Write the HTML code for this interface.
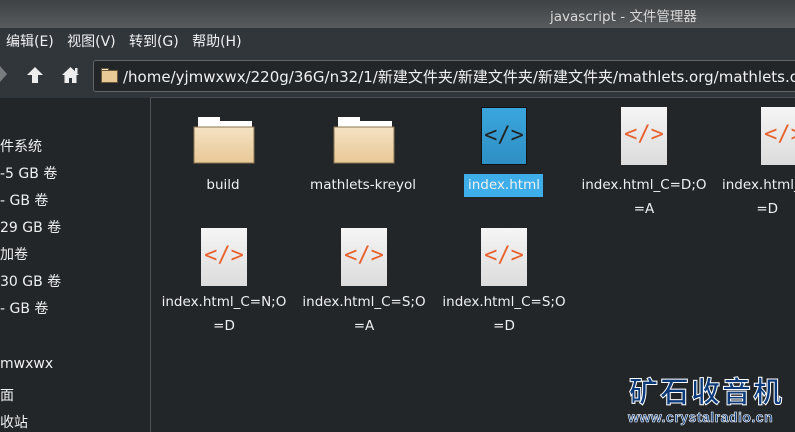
<!DOCTYPE html>
<html><head><meta charset="utf-8"><style>
*{margin:0;padding:0;box-sizing:border-box}
html,body{width:795px;height:432px;overflow:hidden}
body{background:#232629;font-family:"DejaVu Sans","Noto Sans CJK SC",sans-serif;color:#eff0f1;position:relative;font-size:14px}
#w{position:absolute;left:0;top:0;width:795px;height:432px;overflow:hidden}
.a{position:absolute;white-space:nowrap}
.title{left:0;top:0;width:795px;height:28px;background:linear-gradient(#3f4245,#585b5e)}
.menu{left:0;top:28px;width:795px;height:24px;background:#31363b}
.tool{left:0;top:52px;width:795px;height:46px;background:#31363b}
.addr{left:93px;top:60px;width:702px;height:32px;border:1px solid #616569;border-right:none;border-radius:3px 0 0 3px;background:#232629;overflow:hidden}
.pane{left:150px;top:97px;width:645px;height:335px;border-left:1px solid #4d5155;border-top:1px solid #4d5155}
.lbl{font-size:13.5px;text-align:center;width:140px;line-height:24px;color:#eff0f1}
.doc{width:46px;height:58px;background:linear-gradient(#f5f5f5,#dcdcdc);color:#e8612c;font:22px "DejaVu Sans Mono",monospace;text-align:center;line-height:56px}
.side{font-size:14px;left:0}
</style></head><body><div id="w">
<div class="a title"></div>
<div class="a" style="left:550px;top:5px;font-size:13.5px;color:#d8d8d8">javascript - 文件管理器</div>
<div class="a menu"></div>
<div class="a" style="left:6px;top:31px;font-size:14px">编辑(E)&nbsp;&nbsp;&nbsp;视图(V)&nbsp;&nbsp;&nbsp;转到(G)&nbsp;&nbsp;&nbsp;帮助(H)</div>
<div class="a tool"></div>
<svg class="a" style="left:0;top:66px" width="10" height="16"><path d="M0 0L7 8L0 16Z" fill="#7a7d80"/></svg>
<svg class="a" style="left:26px;top:66px" width="18" height="18"><path d="M9 1L1 9H6V17H12V9H17Z" fill="#eee"/></svg>
<svg class="a" style="left:61px;top:66px" width="19" height="18"><path d="M9.5 1L1 9H3.5V17H8V12H11V17H15.5V9H18Z" fill="#eee"/><rect x="14" y="2" width="2.5" height="5" fill="#eee"/></svg>
<div class="a addr"></div>
<svg class="a" style="left:101px;top:68px" width="17" height="15"><rect x="0.5" y="0.5" width="7" height="3" fill="#f4e6c8" stroke="#6b5a3a"/><rect x="0.5" y="2.5" width="16" height="12" fill="#e9c996" stroke="#6b5a3a"/></svg>
<div class="a" style="left:123px;top:66px;font-size:15px;width:672px;overflow:hidden">/home/yjmwxwx/220g/36G/n32/1/新建文件夹/新建文件夹/新建文件夹/mathlets.org/mathlets.org/ja</div>
<div class="a pane"></div>
<div class="a side" style="top:136px">件系统</div>
<div class="a side" style="top:163px">-5 GB 卷</div>
<div class="a side" style="top:190px">- GB 卷</div>
<div class="a side" style="top:217px">29 GB 卷</div>
<div class="a side" style="top:244px">加卷</div>
<div class="a side" style="top:271px">30 GB 卷</div>
<div class="a side" style="top:298px">- GB 卷</div>
<div class="a side" style="top:356px">mwxwx</div>
<div class="a side" style="top:385px">面</div>
<div class="a side" style="top:412px">收站</div>
<svg class="a" style="left:193px;top:115px" width="63" height="52"><defs><linearGradient id="g" x1="0" y1="0" x2="0" y2="1"><stop offset="0" stop-color="#f4e2c4"/><stop offset="1" stop-color="#e8c896"/></linearGradient></defs><rect x="5" y="2" width="22" height="8" fill="#fff"/><rect x="5" y="6" width="54" height="10" fill="#fff"/><path d="M1 12H61V48H1Z" fill="url(#g)" stroke="#8a7550"/></svg>
<svg class="a" style="left:333px;top:115px" width="63" height="52"><rect x="5" y="2" width="22" height="8" fill="#fff"/><rect x="5" y="6" width="54" height="10" fill="#fff"/><path d="M1 12H61V48H1Z" fill="url(#g)" stroke="#8a7550"/></svg>
<div class="a lbl" style="left:153px;top:173px">build</div>
<div class="a lbl" style="left:293px;top:173px">mathlets-kreyol</div>
<div class="a doc" style="left:481px;top:107px;background:linear-gradient(#3aa6dd,#2e8fc4);color:#222;border:1px solid #111">&lt;/&gt;</div>
<div class="a" style="left:464px;top:174px;width:79px;height:23px;background:#3daee9"></div>
<div class="a lbl" style="left:434px;top:173px">index.html</div>
<div class="a doc" style="left:621px;top:107px">&lt;/&gt;</div>
<div class="a lbl" style="left:574px;top:173px">index.html_C=D;O<br>=A</div>
<div class="a doc" style="left:761px;top:107px">&lt;/&gt;</div>
<div class="a lbl" style="left:714px;top:173px;width:81px;overflow:hidden;text-align:left;padding-left:8px">index.html_C=N;O<br>&nbsp;&nbsp;&nbsp;&nbsp;&nbsp;&nbsp;&nbsp;&nbsp;=D</div>
<div class="a doc" style="left:201px;top:228px">&lt;/&gt;</div>
<div class="a lbl" style="left:154px;top:290px">index.html_C=N;O<br>=D</div>
<div class="a doc" style="left:341px;top:228px">&lt;/&gt;</div>
<div class="a lbl" style="left:294px;top:290px">index.html_C=S;O<br>=A</div>
<div class="a doc" style="left:481px;top:228px">&lt;/&gt;</div>
<div class="a lbl" style="left:434px;top:290px">index.html_C=S;O<br>=D</div>
<div class="a" style="left:629px;top:369px;font-size:29px;font-weight:bold;color:#0b3a7a;letter-spacing:2px;-webkit-text-stroke:1px #fff;font-family:'Noto Sans CJK SC',sans-serif">矿石收音机</div>
<div class="a" style="left:628px;top:409px;font-size:14px;font-weight:bold;color:#0b3a7a;-webkit-text-stroke:0.6px #fff;font-family:'Liberation Sans',sans-serif;letter-spacing:0.5px">www.crystalradio.cn</div>
</div></body></html>
